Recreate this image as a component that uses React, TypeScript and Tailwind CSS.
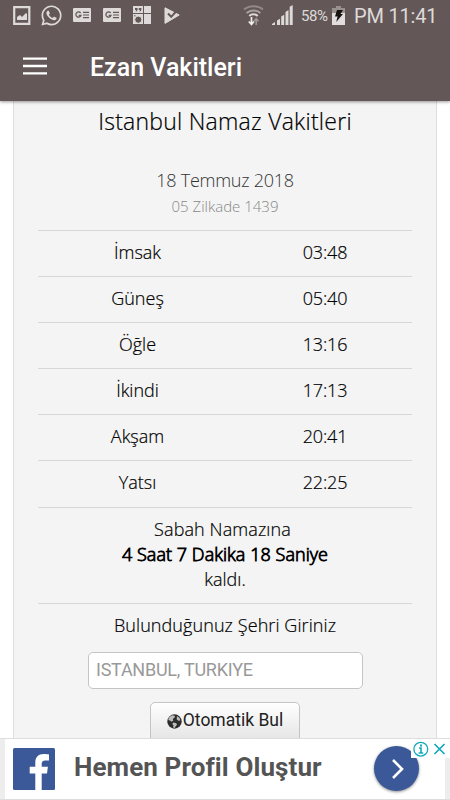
import { FaWhatsapp } from "react-icons/fa";

const times = [
  { name: "İmsak", time: "03:48" },
  { name: "Güneş", time: "05:40" },
  { name: "Öğle", time: "13:16" },
  { name: "İkindi", time: "17:13" },
  { name: "Akşam", time: "20:41" },
  { name: "Yatsı", time: "22:25" },
];

function NewsIcon() {
  return (
    <svg className="w-[18px] h-[14px]" viewBox="0 0 18 14">
      <rect width="18" height="14" rx="1" fill="#dedada" />
      <path d="M7.6 5A2.6 2.6 0 1 0 8 7.3H5.7" fill="none" stroke="#635857" strokeWidth="1.3" />
      <path d="M10 4.3h6M10 7h6M10 9.7h6" stroke="#635857" strokeWidth="1.2" />
    </svg>
  );
}

function StatusBar() {
  return (
    <div className="flex h-8 items-center pl-[13px] text-[#dedada]">
      <svg className="w-[18px] h-[19px] mt-[-1px]" viewBox="0 0 18 19">
        <path d="M1.2 1.2h15.1v16.6H1.2z" fill="none" stroke="#dedada" strokeWidth="2.2" />
        <path d="M4 14v-3l3-2 2 2 4-4 1 1v6z" fill="#dedada" />
      </svg>
      <FaWhatsapp className="ml-[9px] mt-[-2px] w-[23px] h-[23px]" />
      <div className="ml-[10px] mt-[-2px] flex gap-3">
        <NewsIcon />
        <NewsIcon />
      </div>
      <svg className="ml-3 mt-[-2px] w-[18px] h-[18px]" viewBox="0 0 18 18">
        <path d="M0 0h10v7H0zM11 0h7v7h-7zM11 8h7v10h-7zM0 8h10v10H0z" fill="#dedada" />
        <path d="M2 2h2.6v2L3.4 5.6H2.6L3.2 4H2zM5.8 2h2.6v2L7.2 5.6H6.4L7 4H5.8z" fill="#635857" />
        <circle cx="5.3" cy="13.7" r="3.6" fill="#635857" stroke="#dedada" />
        <path d="M1 9.8h1.6" stroke="#635857" />
      </svg>
      <svg className="ml-[13px] mt-[-2px] w-4 h-[17px]" viewBox="0 0 16 17">
        <path d="M1 0.8 15.2 8 1 16.4z" fill="#dedada" stroke="#dedada" strokeLinejoin="round" />
        <path d="m4 6.5 3.2 3.3L13.4 3" fill="none" stroke="#635857" strokeWidth="2" />
      </svg>

      <svg className="ml-[63px] mt-[-1px] w-[21px] h-[21px]" viewBox="0 0 21 21" fill="none">
        <path d="M1 4.6C6 .2 15 .2 20 4.6" stroke="#918887" strokeWidth="2" />
        <path d="M3.6 8c4-3.3 10-3.3 13.8 0" stroke="#aaa2a1" strokeWidth="2" />
        <path d="M6.3 11c2.2-2.3 6.2-2.3 8.4 0" stroke="#dedada" strokeWidth="2" />
        <path d="M8.5 12v7M5.8 16.5l2.7 3 2.4-3" stroke="#eee" strokeWidth="1.7" />
        <path d="M13.2 20v-6M11 16.3l2.2-2.7 2.3 2.7" stroke="#a09897" strokeWidth="1.5" />
      </svg>
      <svg className="ml-2 mt-[-2px] w-[21px] h-5" viewBox="0 0 21 20" fill="#dedada">
        <path d="M0 20v-1l3-2v3zM5 15.5l3-1.8V20H5zM9.2 11.5l3-1.8V20h-3zM13.5 7l3-2v15h-3zM17.7 1.8l3-1.8v20h-3z" />
      </svg>
      <span className="ml-[8px] w-[30px] whitespace-nowrap font-[Roboto] text-[15px] leading-none tracking-[-0.4px]">58%</span>
      <svg className="ml-[1px] mt-[-2px] w-[13px] h-[19px]" viewBox="0 0 13 19">
        <path d="M4 0h5v2h4v5H0V2h4z" fill="#989190" />
        <path d="M0 7h13v12H0z" fill="#e2dede" />
        <path d="M5 4h6L8.5 8H11l-6.8 8 1.4-5.5H3z" fill="#171313" />
      </svg>
      <span className="ml-[9px] whitespace-nowrap font-[Roboto] text-[20px] leading-none tracking-[-0.2px]">PM 11:41</span>
    </div>
  );
}

function AdBanner() {
  return (
    <div className="relative flex h-[62px] shrink-0 items-center border-y border-[#ddd] bg-white pl-[13px] before:absolute before:left-0 before:inset-y-0 before:w-[5px] before:bg-[#ededed] after:absolute after:right-0 after:inset-y-0 after:w-[5px] after:bg-[#ededed]">
      <svg className="w-[42px] h-[42px]" viewBox="0 0 42 42">
        <rect width="42" height="42" rx="1.5" fill="#3b5998" />
        <path d="M22.3 42V25.6h-5.6v-6.8h5.6v-4.3C22.3 9 25.5 6 30.6 6c2.4 0 4.7.3 5.4.4v6h-3.7c-2.8 0-3.6 1.3-3.6 3.3v3.1h6.2l-.9 6.8h-5.3V42z" fill="#fff" />
      </svg>
      <span className="ml-[19px] mt-[-4px] whitespace-nowrap font-[Roboto] text-[26px] font-bold leading-none tracking-[0.1px] text-[#545454]">
        Hemen Profil Oluştur
      </span>
      <div className="absolute left-[374px] top-[7px] flex h-[45px] w-[45px] items-center justify-center rounded-full bg-[#3b5998] shadow-[0_1px_3px_rgba(0,0,0,0.45)]">
        <svg className="w-3 h-5 ml-[3px]" viewBox="0 0 12 20">
          <path d="m1 1 9 9-9 9" fill="none" stroke="#fff" strokeWidth="2.6" />
        </svg>
      </div>
      <div className="absolute right-0 top-0 z-10 flex h-[19px] w-[39px] items-center bg-white pl-[2px]">
        <svg className="w-[36px] h-4" viewBox="0 0 36 16" fill="none" stroke="#12a9bb">
          <circle cx="7.8" cy="8.2" r="6.9" strokeWidth="1.3" />
          <path d="M6 7h2v5M5.6 12h4.6" strokeWidth="1.6" />
          <path d="M8 3.4v2" strokeWidth="2" />
          <path d="m21.5 3 10 10m0-10-10 10" strokeWidth="1.7" />
        </svg>
      </div>
    </div>
  );
}

export default function App() {
  return (
    <div className="flex h-[800px] w-[450px] flex-col overflow-hidden bg-white text-black">
      <header className="relative z-10 h-[101px] shrink-0 bg-[#635857] shadow-[0_1px_3px_rgba(0,0,0,0.4)]">
        <StatusBar />
        <div className="flex h-[69px] items-center pl-[23px]">
          <svg className="w-6 h-[18px] mt-[-2px]" viewBox="0 0 24 18">
            <path d="M0 1.6h24M0 9h24M0 16.4h24" stroke="#fff" strokeWidth="2.4" />
          </svg>
          <h1 className="ml-[43px] mt-[2px] whitespace-nowrap font-[Roboto] text-[25px] font-medium leading-none text-white">
            Ezan Vakitleri
          </h1>
        </div>
      </header>

      <main className="mx-[13px] flex min-h-0 flex-1 flex-col overflow-hidden border-x border-[#ddd] bg-[#f4f4f4] px-6 text-center font-['Open_Sans',sans-serif] text-[18px] font-light">
        <h2 className="mt-[5px] h-[30px] shrink-0 whitespace-nowrap text-[23px] leading-[30px] tracking-[0.25px] [-webkit-text-stroke:0.2px_#000]">
          Istanbul Namaz Vakitleri
        </h2>
        <p className="mt-[32px] h-6 shrink-0 leading-6 tracking-[-0.25px] text-[#333]">18 Temmuz 2018</p>
        <p className="mt-[4px] h-5 shrink-0 text-[15px] leading-5 text-[#888]">05 Zilkade 1439</p>

        <div className="mt-[13.5px] shrink-0 [-webkit-text-stroke:0.2px_#000]">
          {times.map((t) => (
            <div key={t.name} className="flex h-[46.2px] border-t border-[#d6d6d6] leading-[42.4px]">
              <span className="w-[199px] shrink-0">{t.name}</span>
              <span className="w-[176px] shrink-0 tracking-[-0.15px]">{t.time}</span>
            </div>
          ))}
        </div>

        <div className="h-[96.4px] shrink-0 border-t border-[#d6d6d6] pt-[9px] leading-[25px] [-webkit-text-stroke:0.2px_#000]">
          <p className="mr-[5px] tracking-[0.1px]">Sabah Namazına</p>
          <p className="tracking-[0.05px] [-webkit-text-stroke:0.8px_#000]">4 Saat 7 Dakika 18 Saniye</p>
          <p>kaldı.</p>
        </div>

        <div className="flex shrink-0 flex-col items-center border-t border-[#d6d6d6] pt-[9px]">
          <p className="leading-[25px] tracking-[0.08px] [-webkit-text-stroke:0.2px_#000]">Bulunduğunuz Şehri Giriniz</p>
          <input
            className="mt-[13.5px] h-[37px] w-[275px] rounded-[5px] border border-[#c4c4c4] bg-white px-[7.5px] pb-[2px] font-[Roboto] text-[18px] font-normal tracking-[-0.25px] placeholder:text-[#999]"
            placeholder="ISTANBUL, TURKIYE"
          />
          <button className="mt-[13px] flex h-[40px] w-[150px] items-center justify-center rounded-[5px] border border-[#c4c4c4] bg-linear-to-b from-white to-[#e4e4e4] pb-[3px] font-[Roboto] text-[17.5px] font-normal text-[#222]">
            <svg className="w-[15px] h-[15px] mr-[1px] mt-[2px]" viewBox="0 0 15 15">
              <circle cx="7.5" cy="7.5" r="7.2" fill="#2c2c2c" />
              <path d="M2.2 3.2 5 1.2l3 .5-.5 2L5.7 5l.7 1.6-2 1.2L3 6.5 1.2 6zM6.2 8.4l2.5.5 1.5 1.4-1.5 2-1 1.8-1.6-.7.4-2-1.2-1.3zM10 2l2.6 2 .7 2.5-2 .3-1.6-1.6z" fill="#bdbdbd" />
            </svg>
            Otomatik Bul
          </button>
        </div>
      </main>

      <AdBanner />
    </div>
  );
}
